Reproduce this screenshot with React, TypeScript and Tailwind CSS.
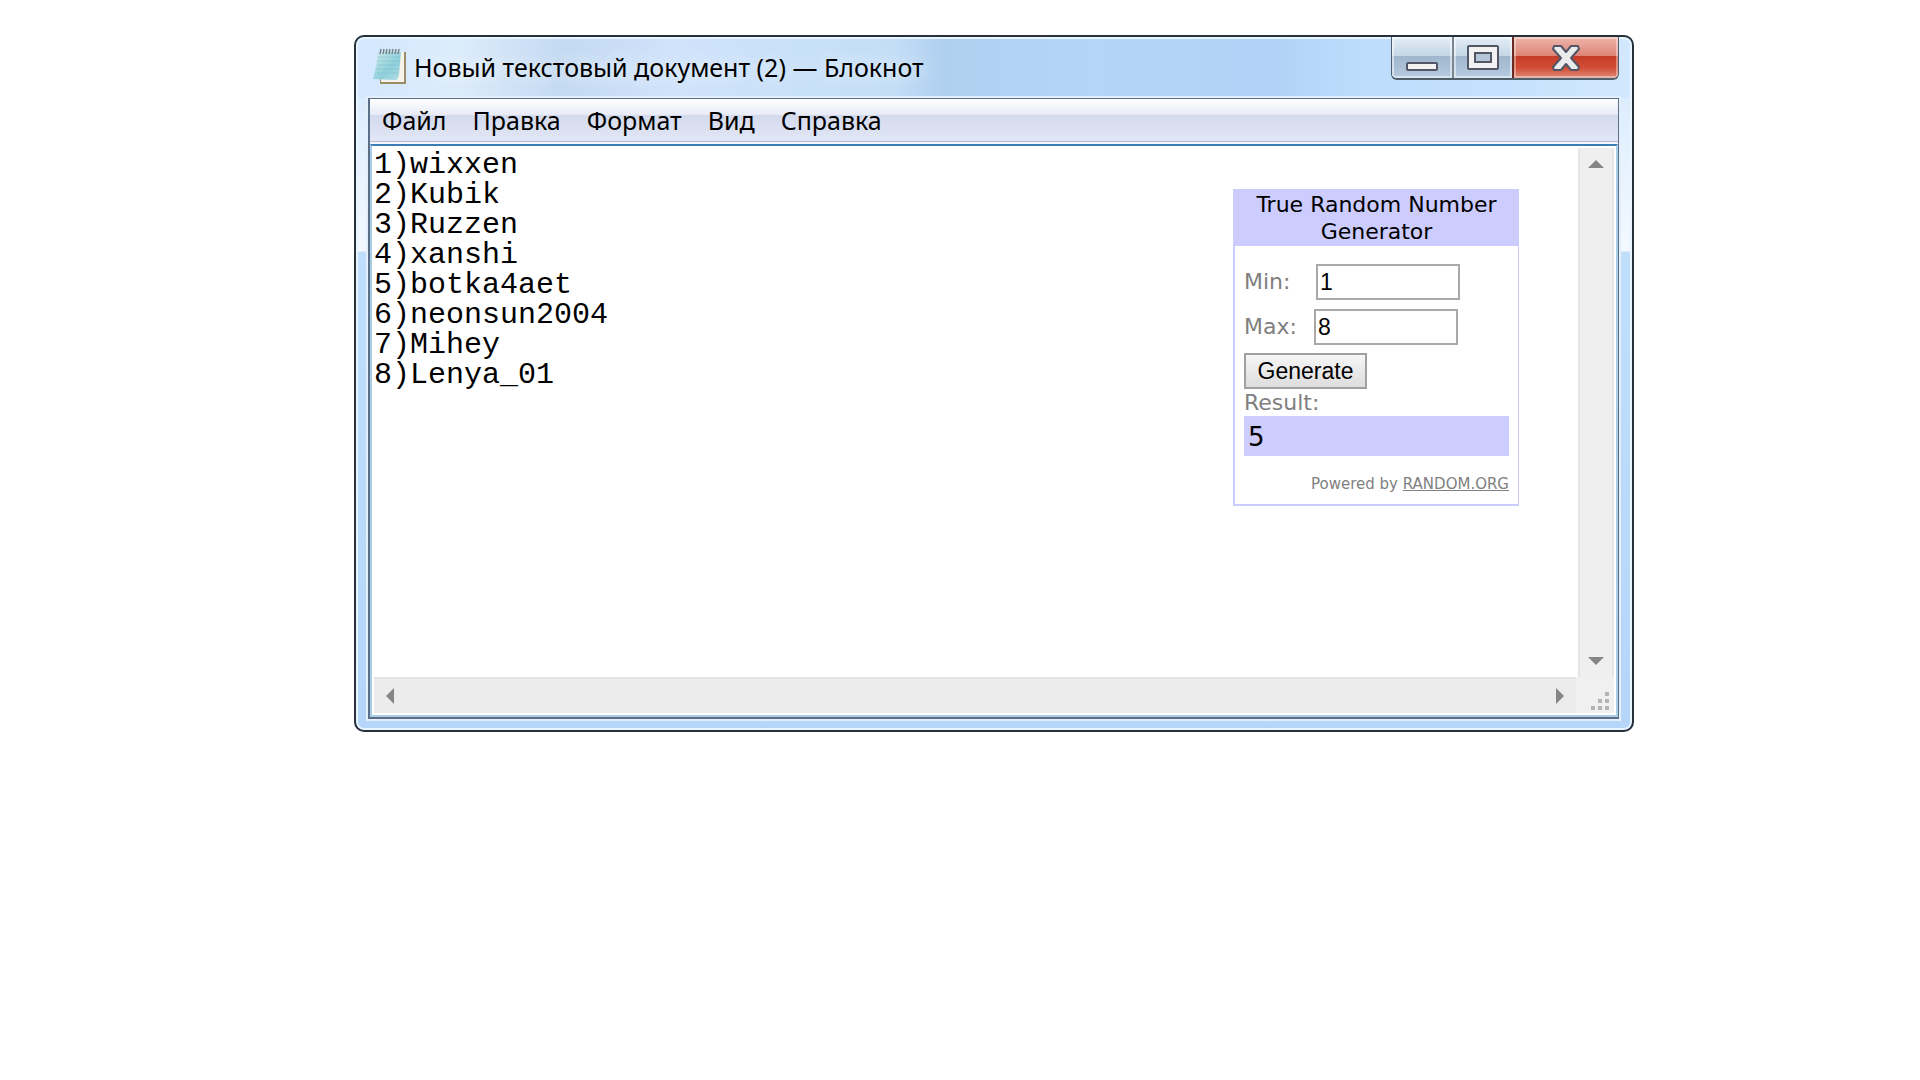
import { useState } from 'react';

const menuItems = ['Файл', 'Правка', 'Формат', 'Вид', 'Справка'];

const initialText = [
  '1)wixxen',
  '2)Kubik',
  '3)Ruzzen',
  '4)xanshi',
  '5)botka4aet',
  '6)neonsun2004',
  '7)Mihey',
  '8)Lenya_01',
].join('\n');

function NotepadIcon() {
  return (
    <svg className="h-[38px] w-[34px] shrink-0" viewBox="0 0 34 38" aria-hidden="true">
      <defs>
        <linearGradient id="pad" x1="0" y1="0" x2="1" y2="1">
          <stop offset="0" stopColor="#cfeaee" />
          <stop offset="0.6" stopColor="#8ed0da" />
          <stop offset="1" stopColor="#b5dde3" />
        </linearGradient>
      </defs>
      <path d="M9 4 H34 V36 H8 V32 Z" fill="#9c8c66" />
      <path d="M9 4 H32 V34 H9 Z" fill="#f6f3e8" />
      <path d="M6 4 L29 4 L27 27 Q26 32 23 32 L1 31 Q5 18 6 4 Z" fill="url(#pad)" />
      <path d="M6 9 H28 M5 13 H28 M5 17 H27 M4 21 H27 M3 25 H26" stroke="#7fc0cb" strokeWidth="1" opacity="0.5" />
      <path d="M9 1 L8 6 M12 1 L11 6 M15 1 L14 6 M18 1 L17 6 M21 1 L20 6 M24 1 L23 6 M27 1 L26 6" stroke="#75858c" strokeWidth="1.5" />
    </svg>
  );
}

function WindowButtons() {
  return (
    <div className="flex h-[43px] shrink-0 overflow-hidden rounded-b-md border-x border-b-2 border-[#4f5e6b]">
      <button
        type="button"
        aria-label="Свернуть"
        className="flex w-[62px] items-end justify-center border-r-2 border-[#7a8793] bg-[linear-gradient(#e3edf7_0%,#c5d6e6_46%,#a0b6cc_47%,#b6cbe0_100%)] pb-[7px] shadow-[inset_0_0_0_2px_#ffffff80]"
      >
        <svg className="h-[9px] w-8" viewBox="0 0 32 9" aria-hidden="true">
          <rect x="1" y="1" width="30" height="7" rx="1" fill="#f2f2f2" stroke="#535666" strokeWidth="2" />
        </svg>
      </button>
      <button
        type="button"
        aria-label="Развернуть"
        className="flex w-[58px] items-center justify-center bg-[linear-gradient(#e3edf7_0%,#c5d6e6_46%,#a0b6cc_47%,#b6cbe0_100%)] shadow-[inset_0_0_0_2px_#ffffff80]"
      >
        <svg className="h-[25px] w-8" viewBox="0 0 32 25" aria-hidden="true">
          <rect x="1" y="1" width="30" height="23" rx="1" fill="#f2f2f2" stroke="#535666" strokeWidth="2" />
          <rect x="8" y="8" width="16" height="9" fill="#b4c6d8" stroke="#535666" strokeWidth="2" />
        </svg>
      </button>
      <button
        type="button"
        aria-label="Закрыть"
        className="flex w-[106px] items-center justify-center border-l-2 border-[#6b2a22] bg-[linear-gradient(#eeb5ab_0%,#dd8577_46%,#c43c28_47%,#d24d36_75%,#dd8a78_100%)] shadow-[inset_0_0_0_2px_#ffffff60]"
      >
        <svg className="h-[26px] w-7" viewBox="0 0 28 26" aria-hidden="true">
          <path
            d="M2 1 H9 L14 7 L19 1 H26 L27 4 L19 13 L27 22 L26 25 H19 L14 19 L9 25 H2 L1 22 L9 13 L1 4 Z"
            fill="#ebebeb"
            stroke="#535666"
            strokeWidth="2"
            strokeLinejoin="round"
          />
        </svg>
      </button>
    </div>
  );
}

function RandomGenerator() {
  const [min, setMin] = useState('1');
  const [max, setMax] = useState('8');
  const [result, setResult] = useState(5);

  const generate = () => {
    const lo = Number(min);
    const hi = Number(max);
    setResult(lo + Math.floor(Math.random() * (hi - lo + 1)));
  };

  return (
    <section className="mt-[43px] mr-[59px] w-[286px] shrink-0 self-start border-2 border-r border-[#ccccff] font-['DejaVu_Sans',sans-serif] text-[#808080]">
      <h2 className="bg-[#ccccff] pb-px text-center text-[22px] leading-[27px] text-black">
        True Random Number Generator
      </h2>
      <div className="flex flex-col items-start px-[9px] pt-[18px] pb-[10px] text-[22px]">
        <div className="flex h-9 items-center">
          <label htmlFor="min" className="w-[72px] pb-[2px]">Min:</label>
          <input
            id="min"
            value={min}
            onChange={(e) => setMin(e.target.value)}
            className="h-9 w-36 border-2 border-[#a9a9a9] bg-white px-[2px] font-['Liberation_Sans',sans-serif] text-[23px] text-black"
          />
        </div>
        <div className="mt-[9px] flex h-9 items-center">
          <label htmlFor="max" className="w-[70px] pb-[2px]">Max:</label>
          <input
            id="max"
            value={max}
            onChange={(e) => setMax(e.target.value)}
            className="h-9 w-36 border-2 border-[#a9a9a9] bg-white px-[2px] font-['Liberation_Sans',sans-serif] text-[23px] text-black"
          />
        </div>
        <button
          type="button"
          onClick={generate}
          className="mt-2 h-9 w-[123px] border-2 border-[#a0a0a0] bg-linear-to-b from-[#f6f6f6] to-[#dddddd] font-['Liberation_Sans',sans-serif] text-[23px] leading-8 text-black"
        >
          Generate
        </button>
        <span className="leading-[27px]">Result:</span>
        <output className="block h-10 w-full bg-[#ccccff] px-1 text-[26px] leading-[42px] text-black">{result}</output>
        <p className="mt-[18px] self-end text-[15px] leading-[20px]">
          Powered by{' '}
          <a href="#random" className="underline">RANDOM.ORG</a>
        </p>
      </div>
    </section>
  );
}

function ScrollArrow({ label, d }: { label: string; d: string }) {
  return (
    <button type="button" aria-label={label} className="flex size-8 shrink-0 items-center justify-center">
      <svg className="size-4" viewBox="0 0 16 16" aria-hidden="true">
        <path d={d} fill="#858585" />
      </svg>
    </button>
  );
}

export default function App() {
  const [text, setText] = useState(initialText);

  return (
    <div className="min-h-screen bg-white pt-[35px] pr-[286px] pb-10 pl-[354px] font-['Noto_Sans',sans-serif] text-black">
      <main className="rounded-[10px] border-2 border-[#27313c] bg-[linear-gradient(90deg,#d3e8fe_0%,#dcecfb_8%,#c4daf2_16%,#cfe3fb_25%,#c4def7_42%,#b0d0f0_46%,#b3d5f7_58%,#afd2f6_72%,#bcdcfc_78%,#c5e1fd_90%,#d3e8fe_100%),linear-gradient(#d3e8fe_0px,#f3f9ff_214px,#bfdffd_215px,#b5d6f9_100%)] [background-size:100%_61px,100%_100%] bg-no-repeat pr-[13px] pb-[11px] pl-3 shadow-[inset_0_0_0_2px_#e8f4ff]">
        {/* Title bar */}
        <header className="flex h-[61px] items-start">
          <h1 className="flex min-w-0 flex-1 items-center gap-2 pt-[11px] pl-1 text-[25px] leading-[38px] whitespace-nowrap [text-shadow:0_0_16px_#ffffff]">
            <NotepadIcon />
            Новый текстовый документ (2) — Блокнот
          </h1>
          <WindowButtons />
        </header>

        <div className="border-x border-t border-b-2 border-l-2 border-[#5b7088] bg-[#f4f6fc] shadow-[0_0_0_2px_#e3f0fc]">
          <nav className="mb-[2px] flex h-[43px] items-center gap-[26px] border-b border-[#b4b9cf] bg-[linear-gradient(#ffffff_0%,#e8ebf6_37%,#d4daed_38%,#e2e7f6_100%)] pl-3 text-[25px]">
            {menuItems.map((item) => (
              <button key={item} type="button" className="leading-8">
                {item}
              </button>
            ))}
          </nav>

          <div className="border-2 border-[#a9cde6] border-t-[#3b7cb4] bg-white pr-[2px] pb-[2px]">
            <div className="flex">
              <div className="flex min-h-[531px] min-w-0 flex-1">
                <textarea
                  aria-label="Текст документа"
                  spellCheck={false}
                  value={text}
                  onChange={(e) => setText(e.target.value)}
                  className="min-w-0 flex-1 resize-none overflow-hidden bg-white pt-1 pl-[2px] font-['Liberation_Mono',monospace] text-[30px] leading-[30px] outline-none"
                />
                <RandomGenerator />
              </div>
              <div className="mt-[2px] flex w-9 flex-col justify-between border-x-2 border-[#e6e6e6] bg-[#efefef]">
                <ScrollArrow label="Вверх" d="M0 12 L8 4 L16 12 Z" />
                <ScrollArrow label="Вниз" d="M0 4 L8 12 L16 4 Z" />
              </div>
            </div>
            <div className="flex h-9 pl-[2px]">
              <div className="flex flex-1 items-center justify-between border-t-2 border-[#e4e4e4] bg-[#ececec]">
                <ScrollArrow label="Влево" d="M12 0 L4 8 L12 16 Z" />
                <ScrollArrow label="Вправо" d="M4 0 L12 8 L4 16 Z" />
              </div>
              <div className="flex w-[38px] items-end justify-end bg-[#f0f0f0] pr-1 pb-[2px]">
                <svg className="size-5" viewBox="0 0 20 20" aria-hidden="true">
                  <path d="M15 1h4v4h-4z M8 8h4v4h-4z M15 8h4v4h-4z M1 15h4v4h-4z M8 15h4v4h-4z M15 15h4v4h-4z" fill="#b4b4b4" />
                </svg>
              </div>
            </div>
          </div>
        </div>
      </main>
    </div>
  );
}
